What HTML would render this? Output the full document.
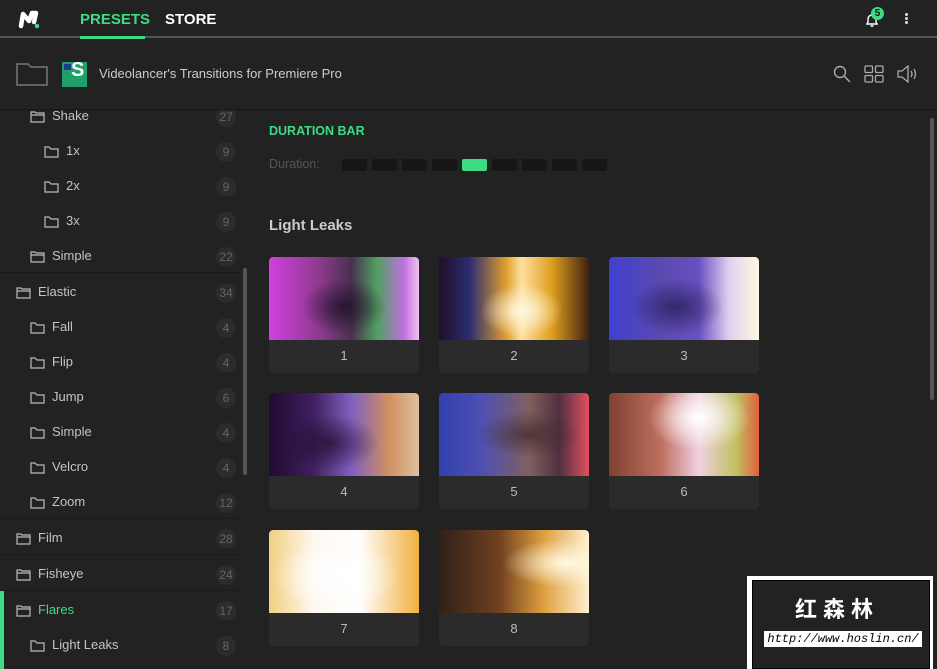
<!DOCTYPE html>
<html><head><meta charset="utf-8"><style>
*{box-sizing:border-box;margin:0;padding:0}
body{width:937px;height:669px;overflow:hidden;background:#222;font-family:"Liberation Sans",sans-serif;color:#ccc;position:relative}
.top{position:absolute;left:0;top:0;width:937px;height:38px;background:#222;border-bottom:2px solid #555}
.tab{position:absolute;top:11px;font-weight:bold;font-size:15px}
.bar2{position:absolute;left:0;top:40px;width:937px;height:70px;background:#222;border-bottom:1px solid #181818}
.side{position:absolute;left:0;top:110px;width:240px;height:559px;overflow:hidden}
.row{position:absolute;left:0;width:240px;height:36px;font-size:13px;color:#c4c4c4}
.row .t{position:absolute;top:11px}
.row .c{position:absolute;right:4px;top:10px;width:20px;height:20px;border-radius:10px;background:#2c2c2c;color:#666;font-size:12px;text-align:center;line-height:20px}
.sep{border-top:1px solid #1a1a1a}
.fold{position:absolute;top:13px}
.card{position:absolute;width:150px;height:116px;background:#2b2b2b;border-radius:4px;overflow:hidden}
.card .img{height:83px;border-radius:4px 4px 0 0}
.card .n{text-align:center;font-size:13px;color:#bbb;margin-top:8px}
.seg{position:absolute;top:159px;width:25px;height:12px;background:#161616;border-radius:2px}
</style></head><body>
<div class="top">
<svg style="position:absolute;left:18px;top:9px" width="24" height="20" viewBox="0 0 24 20"><path d="M3 17 L5 5 L11 12 L14 4 L18 4 L16 13" stroke="#fff" stroke-width="4.5" fill="none" stroke-linejoin="round" stroke-linecap="round"/><circle cx="19" cy="17" r="2.3" fill="#3ddc84"/></svg>
<div class="tab" style="left:80px;color:#3ddc84">PRESETS</div>
<div class="tab" style="left:165px;color:#fff">STORE</div>
<svg style="position:absolute;left:864px;top:12px" width="16" height="16" viewBox="0 0 16 16"><path d="M3 12 L4 10 V7 a4 4 0 0 1 8 0 V10 L13 12 Z M6.5 14 h3" stroke="#fff" stroke-width="1.4" fill="none"/></svg>
<div style="position:absolute;left:871px;top:7px;width:13px;height:13px;border-radius:7px;background:#3ddc84;color:#111;font-size:10px;font-weight:bold;text-align:center;line-height:13px">5</div>
<div style="position:absolute;left:905px;top:13px;width:3px;height:3px;background:#ddd;border-radius:2px;box-shadow:0 4px 0 #ddd,0 8px 0 #ddd"></div>
</div>
<div style="position:absolute;left:80px;top:36px;width:65px;height:3px;background:#3ddc84"></div>
<div class="bar2">
<svg style="position:absolute;left:16px;top:22px" width="32" height="24" viewBox="0 0 32 24"><path d="M1 2 H12 L15 5 H31 V23 H1 Z" stroke="#777" stroke-width="1.5" fill="none"/></svg>
<div style="position:absolute;left:62px;top:22px;width:25px;height:25px;background:#1fa06a"><div style="position:absolute;left:2px;top:2px;width:7px;height:6px;background:#1b3c8c"></div><div style="position:absolute;left:9px;top:-3px;color:#fff;font-weight:bold;font-size:20px">S</div></div>
<div style="position:absolute;left:99px;top:26px;font-size:13px;color:#ccc">Videolancer's Transitions for Premiere Pro</div>
<svg style="position:absolute;left:833px;top:25px" width="18" height="18" viewBox="0 0 18 18"><circle cx="7" cy="7" r="5.5" stroke="#aaa" stroke-width="1.4" fill="none"/><path d="M11 11 L17 17" stroke="#aaa" stroke-width="1.5"/></svg>
<svg style="position:absolute;left:864px;top:25px" width="20" height="18" viewBox="0 0 20 18"><rect x="1" y="1" width="7.5" height="6.5" rx="1" stroke="#aaa" stroke-width="1.3" fill="none"/><rect x="11.5" y="1" width="7.5" height="6.5" rx="1" stroke="#aaa" stroke-width="1.3" fill="none"/><rect x="1" y="10.5" width="7.5" height="6.5" rx="1" stroke="#aaa" stroke-width="1.3" fill="none"/><rect x="11.5" y="10.5" width="7.5" height="6.5" rx="1" stroke="#aaa" stroke-width="1.3" fill="none"/></svg>
<svg style="position:absolute;left:897px;top:25px" width="22" height="18" viewBox="0 0 22 18"><path d="M1 6 H5 L11 1 V17 L5 12 H1 Z" stroke="#aaa" stroke-width="1.3" fill="none"/><path d="M14 6 Q16 9 14 12 M17 4 Q20 9 17 14" stroke="#aaa" stroke-width="1.3" fill="none"/></svg>
</div>
<div class="side">
<div class="row" style="top:-13px"><svg class="fold" style="left:30px" width="15" height="13" viewBox="0 0 15 13"><path d="M1 2 H5 L6 3 H14 V12 H1 Z M1 5 H14" stroke="#bbb" stroke-width="1.2" fill="none"/></svg><span class="t" style="left:52px">Shake</span><span class="c">27</span></div>
<div class="row" style="top:22px"><svg class="fold" style="left:44px" width="15" height="13" viewBox="0 0 15 13"><path d="M1 2 H5 L7 4 H14 V12 H1 Z" stroke="#bbb" stroke-width="1.2" fill="none"/></svg><span class="t" style="left:66px">1x</span><span class="c">9</span></div>
<div class="row" style="top:57px"><svg class="fold" style="left:44px" width="15" height="13" viewBox="0 0 15 13"><path d="M1 2 H5 L7 4 H14 V12 H1 Z" stroke="#bbb" stroke-width="1.2" fill="none"/></svg><span class="t" style="left:66px">2x</span><span class="c">9</span></div>
<div class="row" style="top:92px"><svg class="fold" style="left:44px" width="15" height="13" viewBox="0 0 15 13"><path d="M1 2 H5 L7 4 H14 V12 H1 Z" stroke="#bbb" stroke-width="1.2" fill="none"/></svg><span class="t" style="left:66px">3x</span><span class="c">9</span></div>
<div class="row" style="top:127px"><svg class="fold" style="left:30px" width="15" height="13" viewBox="0 0 15 13"><path d="M1 2 H5 L6 3 H14 V12 H1 Z M1 5 H14" stroke="#bbb" stroke-width="1.2" fill="none"/></svg><span class="t" style="left:52px">Simple</span><span class="c">22</span></div>
<div class="row sep" style="top:162px"><svg class="fold" style="left:16px" width="15" height="13" viewBox="0 0 15 13"><path d="M1 2 H5 L6 3 H14 V12 H1 Z M1 5 H14" stroke="#bbb" stroke-width="1.2" fill="none"/></svg><span class="t" style="left:38px">Elastic</span><span class="c">34</span></div>
<div class="row" style="top:198px"><svg class="fold" style="left:30px" width="15" height="13" viewBox="0 0 15 13"><path d="M1 2 H5 L7 4 H14 V12 H1 Z" stroke="#bbb" stroke-width="1.2" fill="none"/></svg><span class="t" style="left:52px">Fall</span><span class="c">4</span></div>
<div class="row" style="top:233px"><svg class="fold" style="left:30px" width="15" height="13" viewBox="0 0 15 13"><path d="M1 2 H5 L7 4 H14 V12 H1 Z" stroke="#bbb" stroke-width="1.2" fill="none"/></svg><span class="t" style="left:52px">Flip</span><span class="c">4</span></div>
<div class="row" style="top:268px"><svg class="fold" style="left:30px" width="15" height="13" viewBox="0 0 15 13"><path d="M1 2 H5 L7 4 H14 V12 H1 Z" stroke="#bbb" stroke-width="1.2" fill="none"/></svg><span class="t" style="left:52px">Jump</span><span class="c">6</span></div>
<div class="row" style="top:303px"><svg class="fold" style="left:30px" width="15" height="13" viewBox="0 0 15 13"><path d="M1 2 H5 L7 4 H14 V12 H1 Z" stroke="#bbb" stroke-width="1.2" fill="none"/></svg><span class="t" style="left:52px">Simple</span><span class="c">4</span></div>
<div class="row" style="top:338px"><svg class="fold" style="left:30px" width="15" height="13" viewBox="0 0 15 13"><path d="M1 2 H5 L7 4 H14 V12 H1 Z" stroke="#bbb" stroke-width="1.2" fill="none"/></svg><span class="t" style="left:52px">Velcro</span><span class="c">4</span></div>
<div class="row" style="top:373px"><svg class="fold" style="left:30px" width="15" height="13" viewBox="0 0 15 13"><path d="M1 2 H5 L7 4 H14 V12 H1 Z" stroke="#bbb" stroke-width="1.2" fill="none"/></svg><span class="t" style="left:52px">Zoom</span><span class="c">12</span></div>
<div class="row sep" style="top:408px"><svg class="fold" style="left:16px" width="15" height="13" viewBox="0 0 15 13"><path d="M1 2 H5 L6 3 H14 V12 H1 Z M1 5 H14" stroke="#bbb" stroke-width="1.2" fill="none"/></svg><span class="t" style="left:38px">Film</span><span class="c">28</span></div>
<div class="row sep" style="top:444px"><svg class="fold" style="left:16px" width="15" height="13" viewBox="0 0 15 13"><path d="M1 2 H5 L6 3 H14 V12 H1 Z M1 5 H14" stroke="#bbb" stroke-width="1.2" fill="none"/></svg><span class="t" style="left:38px">Fisheye</span><span class="c">24</span></div>
<div class="row sep" style="top:480px"><div style="position:absolute;left:0;top:0;width:4px;height:80px;background:#3ddc84"></div><svg class="fold" style="left:16px" width="15" height="13" viewBox="0 0 15 13"><path d="M1 2 H5 L6 3 H14 V12 H1 Z M1 5 H14" stroke="#bbb" stroke-width="1.2" fill="none"/></svg><span class="t" style="left:38px;color:#3ddc84">Flares</span><span class="c">17</span></div>
<div class="row" style="top:516px"><svg class="fold" style="left:30px" width="15" height="13" viewBox="0 0 15 13"><path d="M1 2 H5 L7 4 H14 V12 H1 Z" stroke="#bbb" stroke-width="1.2" fill="none"/></svg><span class="t" style="left:52px">Light Leaks</span><span class="c">8</span></div>
</div>
<div style="position:absolute;left:243px;top:268px;width:4px;height:207px;background:#555;border-radius:2px"></div>
<div style="position:absolute;left:930px;top:118px;width:4px;height:282px;background:#555;border-radius:2px"></div>
<div style="position:absolute;left:269px;top:124px;font-size:12.5px;font-weight:bold;color:#3ddc84">DURATION BAR</div>
<div style="position:absolute;left:269px;top:157px;font-size:12.5px;color:#555">Duration:</div>
<div class="seg" style="left:342px"></div><div class="seg" style="left:372px"></div><div class="seg" style="left:402px"></div><div class="seg" style="left:432px"></div><div class="seg" style="left:462px;background:#3ddc84"></div><div class="seg" style="left:492px"></div><div class="seg" style="left:522px"></div><div class="seg" style="left:552px"></div><div class="seg" style="left:582px"></div>
<div style="position:absolute;left:269px;top:217px;font-size:15px;font-weight:bold;color:#ccc">Light Leaks</div>
<div class="card" style="left:269px;top:257px"><div class="img" style="background:radial-gradient(ellipse at 50% 60%,rgba(30,15,40,.8),transparent 40%),linear-gradient(90deg,#d040e0,#8a3a8a 35%,#4a3050 55%,#50a060 72%,#c070e0 90%,#f0c0f0)"></div><div class="n">1</div></div>
<div class="card" style="left:439px;top:257px"><div class="img" style="background:radial-gradient(ellipse at 55% 65%,#fff8e0,transparent 35%),linear-gradient(90deg,#201028,#2a2a70 20%,#e0a030 45%,#ffe0a0 55%,#e0a020 75%,#402010)"></div><div class="n">2</div></div>
<div class="card" style="left:609px;top:257px"><div class="img" style="background:radial-gradient(ellipse at 45% 60%,rgba(40,30,90,.8),transparent 40%),linear-gradient(90deg,#4040d0,#5a4ab0 35%,#6a50c0 60%,#e0d0f0 80%,#fff8e0)"></div><div class="n">3</div></div>
<div class="card" style="left:269px;top:393px"><div class="img" style="background:radial-gradient(ellipse at 40% 60%,rgba(30,10,40,.7),transparent 40%),linear-gradient(90deg,#200a30,#402060 30%,#8060c0 55%,#d09060 80%,#e0c0a0)"></div><div class="n">4</div></div>
<div class="card" style="left:439px;top:393px"><div class="img" style="background:radial-gradient(ellipse at 60% 50%,rgba(60,40,40,.7),transparent 40%),linear-gradient(90deg,#3040b0,#5050b0 30%,#806060 60%,#503040 80%,#e05060)"></div><div class="n">5</div></div>
<div class="card" style="left:609px;top:393px"><div class="img" style="background:radial-gradient(ellipse at 60% 30%,#fff,transparent 40%),linear-gradient(90deg,#804030,#c07060 35%,#f0d0e0 60%,#c0c060 85%,#e06040)"></div><div class="n">6</div></div>
<div class="card" style="left:269px;top:530px"><div class="img" style="background:radial-gradient(ellipse at 45% 55%,#fff,transparent 55%),linear-gradient(90deg,#f0d080,#fff8f0 30%,#fff 60%,#f0b040)"></div><div class="n">7</div></div>
<div class="card" style="left:439px;top:530px"><div class="img" style="background:radial-gradient(ellipse at 85% 40%,#fff8e0,transparent 35%),linear-gradient(90deg,#302018,#704020 40%,#e0a040 70%,#fff0d0)"></div><div class="n">8</div></div>
<div style="position:absolute;left:747px;top:576px;width:186px;height:93px;background:#fff"></div>
<div style="position:absolute;left:752px;top:580px;width:178px;height:89px;background:#222;border:1px solid #000"></div>
<div style="position:absolute;left:795px;top:592px;font-family:'Noto Sans CJK SC',sans-serif;font-size:22px;font-weight:bold;color:#fff;letter-spacing:6px">红森林</div>
<div style="position:absolute;left:764px;top:631px;width:158px;height:16px;background:#fff;color:#000;font-family:'Liberation Mono',monospace;font-style:italic;font-size:12px;line-height:16px;text-align:center">http://www.hoslin.cn/</div>
</body></html>
